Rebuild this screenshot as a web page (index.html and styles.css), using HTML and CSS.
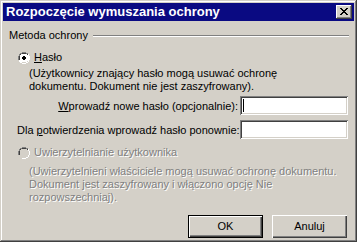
FILE: index.html
```html
<!DOCTYPE html>
<html>
<head>
<meta charset="utf-8">
<link rel="stylesheet" href="styles.css">
</head>
<body>
<div class="window">
  <div class="titlebar">
    <span class="title">Rozpoczęcie wymuszania ochrony</span>
    <span class="close">
      <svg width="8" height="7" viewBox="0 0 8 7"><path d="M0 0h2v1h1v1h2V1h1V0h2v1H7v1H6v1H5v1h1v1h1v1h1v1H6V6H5V5H3v1H2v1H0V6h1V5h1V4h1V3H2V2H1V1H0z" fill="#000"/></svg>
    </span>
  </div>
  <div class="content">
    <div class="group-head"><span>Metoda ochrony</span><span class="etch"></span></div>

    <div class="radio-row">
      <svg class="radio" width="12" height="12" viewBox="0 0 12 12">
        <path d="M4 0h4v1h2v1h1v2h1v4h-1v2h-1v1H8v1H4v-1H2v-1H1V8H0V4h1V2h1V1h2z" fill="#fff"/>
        <path d="M4 0h4v1h2v1H8V1H4v1H2v2H1v4H0V4h1V2h1V1h2z" fill="#808080"/>
        <path d="M4 1h4v1h2v1H8V2H4v1H3v1H2v4H1V4h1V2h2z" fill="#404040"/>
        <path d="M11 2h-1v2h1zM11 4v4h1V4zM11 8h-1v2H8v1H4v1h4v-1h2v-1h1z" fill="#fff"/>
        <path d="M10 3h-1v1h1zM10 4v4h-1V4zM9 8v1H8v1H4v1h4v-1h2V8z" fill="#d4d0c8"/>
        <rect x="2" y="3" width="8" height="6" fill="#fff"/>
        <rect x="3" y="2" width="6" height="8" fill="#fff"/>
        <path d="M5 4h2v1h1v2H7v1H5V7H4V5h1z" fill="#000"/>
      </svg>
      <span class="rlabel"><u>H</u>asło</span>
    </div>
    <div class="desc">(Użytkownicy znający hasło mogą usuwać ochronę<br>dokumentu. Dokument nie jest zaszyfrowany).</div>

    <div class="field-row first">
      <span class="flabel"><u>W</u>prowadź nowe hasło (opcjonalnie):</span>
      <span class="input"><span class="caret"></span></span>
    </div>
    <div class="field-row second">
      <span class="flabel">Dla <u>p</u>otwierdzenia wprowadź hasło ponownie:</span>
      <span class="input"></span>
    </div>

    <div class="radio-row disabled-row">
      <svg class="radio" width="12" height="12" viewBox="0 0 12 12">
        <path d="M4 0h4v1h2v1H8V1H4v1H2v2H1v4H0V4h1V2h1V1h2z" fill="#808080"/>
        <path d="M4 1h4v1h2v1H8V2H4v1H3v1H2v4H1V4h1V2h2z" fill="#404040"/>
        <path d="M11 2h-1v2h1zM11 4v4h1V4zM11 8h-1v2H8v1H4v1h4v-1h2v-1h1z" fill="#fff"/>
        <rect x="2" y="3" width="8" height="6" fill="#d4d0c8"/>
        <rect x="3" y="2" width="6" height="8" fill="#d4d0c8"/>
      </svg>
      <span class="rlabel disabled">Uwierzytelnianie użytkownika</span>
    </div>
    <div class="desc disabled">(Uwierzytelnieni właściciele mogą usuwać ochronę dokumentu.<br>Dokument jest zaszyfrowany i włączono opcję Nie<br>rozpowszechniaj).</div>

    <div class="buttons">
      <span class="btn default"><span class="btn-in">OK</span></span>
      <span class="btn"><span class="btn-in">Anuluj</span></span>
    </div>
  </div>
</div>
</body>
</html>
```
FILE: styles.css
```css
* { box-sizing: border-box; }
html, body { margin: 0; padding: 0; background: #d4d0c8; }
body {
  font-family: "Liberation Sans", Arial, sans-serif;
  font-size: 11px;
  line-height: 13px;
  color: #000;
}
.window {
  width: 357px;
  height: 242px;
  background: #d4d0c8;
  padding: 3px;
  box-shadow: inset -1px -1px #404040, inset 1px 1px #d4d0c8, inset -2px -2px #808080, inset 2px 2px #fff;
}
.titlebar {
  height: 18px;
  background: #0a0a82;
  display: flex;
  align-items: center;
  justify-content: space-between;
  padding: 0 2px 0 3px;
}
.title {
  color: #fff;
  font-weight: bold;
  font-size: 13px;
  line-height: 16px;
}
.close {
  width: 16px;
  height: 14px;
  background: #d4d0c8;
  box-shadow: inset -1px -1px #404040, inset 1px 1px #fff, inset -2px -2px #808080;
  display: flex;
  align-items: center;
  justify-content: center;
  padding: 0 1px 1px 0;
}
.close svg { display: block; }
.content {
  padding: 0 5px 0 6px;
}
.group-head {
  display: flex;
  align-items: center;
  margin-top: 8px;
  height: 13px;
}
.etch {
  flex: 1;
  height: 2px;
  border-top: 1px solid #808080;
  border-bottom: 1px solid #fff;
  margin-left: 5px;
  margin-top: 1px;
}
.radio-row {
  display: flex;
  align-items: center;
  margin-top: 9px;
  margin-left: 9px;
  height: 13px;
}
.radio { display: block; flex: none; }
.rlabel { margin-left: 4px; }
.desc {
  margin-left: 20px;
  margin-top: 3px;
}
.disabled {
  color: #808080;
  text-shadow: 1px 1px 0 #fff;
}
.field-row {
  display: flex;
  align-items: center;
  height: 19px;
}
.field-row.first {
  margin-top: 3px;
  justify-content: flex-end;
  gap: 2px;
  padding-right: 1px;
}
.field-row.second {
  margin-top: 5px;
  justify-content: space-between;
  padding-left: 8px;
  padding-right: 1px;
}
.flabel { padding-top: 1px; }
.input {
  width: 108px;
  height: 19px;
  background: #fff;
  box-shadow: inset 1px 1px #808080, inset -1px -1px #fff, inset 2px 2px #404040, inset -2px -2px #d4d0c8;
  position: relative;
  flex: none;
}
.caret {
  position: absolute;
  left: 3px;
  top: 3px;
  width: 1px;
  height: 13px;
  background: #000;
}
.disabled-row { margin-top: 7px; }
.desc.disabled { margin-top: 6px; }
.buttons {
  display: flex;
  justify-content: flex-end;
  gap: 9px;
  margin-top: 11px;
  padding-right: 2px;
}
.btn {
  width: 75px;
  height: 23px;
  display: flex;
  background: #d4d0c8;
}
.btn-in {
  flex: 1;
  display: flex;
  align-items: center;
  justify-content: center;
  box-shadow: inset 1px 1px #fff, inset -1px -1px #404040, inset -2px -2px #808080;
}
.btn.default {
  border: 1px solid #000;
}
```
